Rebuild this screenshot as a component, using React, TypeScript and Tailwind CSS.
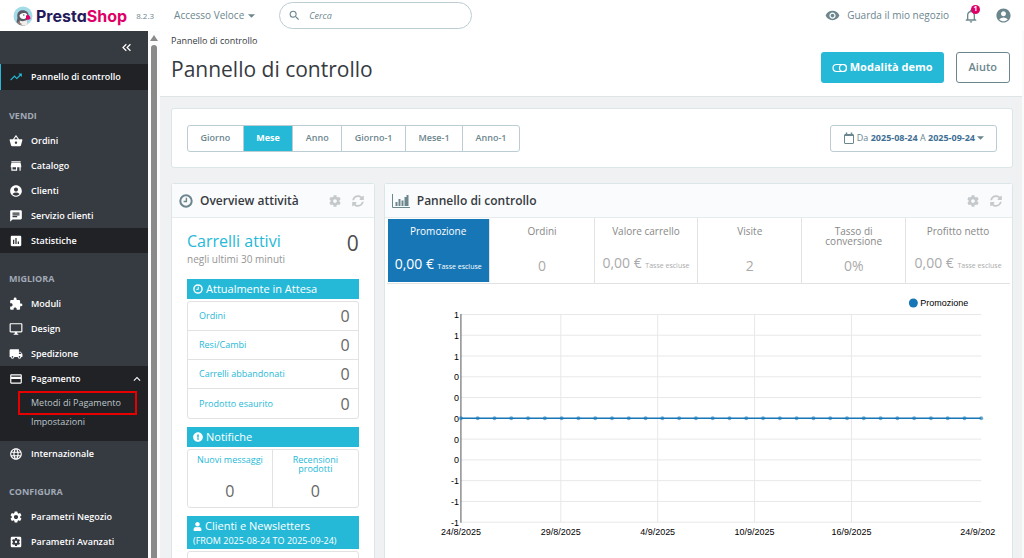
import type { ReactNode } from 'react';
import type { IconType } from 'react-icons';
import { FaCog, FaExclamationCircle, FaSyncAlt, FaUser } from 'react-icons/fa';
import {
  MdAccountCircle,
  MdAssessment,
  MdChat,
  MdExtension,
  MdKeyboardArrowUp,
  MdKeyboardDoubleArrowLeft,
  MdLanguage,
  MdLocalShipping,
  MdNotificationsNone,
  MdOutlineDesktopWindows,
  MdPayment,
  MdSearch,
  MdSettings,
  MdSettingsApplications,
  MdShoppingBasket,
  MdStore,
  MdTrendingUp,
  MdVisibility,
} from 'react-icons/md';

interface MenuItem {
  label: string;
  icon: IconType;
  active?: boolean;
  children?: { label: string; highlighted?: boolean }[];
}

const menu: { title: string; items: MenuItem[] }[] = [
  {
    title: 'VENDI',
    items: [
      { label: 'Ordini', icon: MdShoppingBasket },
      { label: 'Catalogo', icon: MdStore },
      { label: 'Clienti', icon: MdAccountCircle },
      { label: 'Servizio clienti', icon: MdChat },
      { label: 'Statistiche', icon: MdAssessment, active: true },
    ],
  },
  {
    title: 'MIGLIORA',
    items: [
      { label: 'Moduli', icon: MdExtension },
      { label: 'Design', icon: MdOutlineDesktopWindows },
      { label: 'Spedizione', icon: MdLocalShipping },
      {
        label: 'Pagamento',
        icon: MdPayment,
        active: true,
        children: [{ label: 'Metodi di Pagamento', highlighted: true }, { label: 'Impostazioni' }],
      },
      { label: 'Internazionale', icon: MdLanguage },
    ],
  },
  {
    title: 'CONFIGURA',
    items: [
      { label: 'Parametri Negozio', icon: MdSettings },
      { label: 'Parametri Avanzati', icon: MdSettingsApplications },
    ],
  },
];

const periods = ['Giorno', 'Mese', 'Anno', 'Giorno-1', 'Mese-1', 'Anno-1'];

const pending = ['Ordini', 'Resi/Cambi', 'Carrelli abbandonati', 'Prodotto esaurito'];

const kpis = [
  { label: 'Promozione', value: '0,00 €', note: 'Tasse escluse', active: true },
  { label: 'Ordini', value: '0' },
  { label: 'Valore carrello', value: '0,00 €', note: 'Tasse escluse' },
  { label: 'Visite', value: '2' },
  { label: 'Tasso di conversione', value: '0%' },
  { label: 'Profitto netto', value: '0,00 €', note: 'Tasse escluse' },
];

const yLabels = ['1', '1', '1', '0', '0', '0', '0', '0', '-1', '-1', '-1'];

const xTicks = [
  { x: 73, label: '24/8/2025' },
  { x: 173, label: '29/8/2025' },
  { x: 270, label: '4/9/2025' },
  { x: 367, label: '10/9/2025' },
  { x: 464, label: '16/9/2025' },
];

function Puffin() {
  return (
    <svg viewBox="0 0 20 20" className="size-5" aria-hidden="true">
      <circle cx="10" cy="10" r="9.500" fill="#a4dbe8" />
      <path d="M4.500 12C3.500 7 6 4.200 9.800 4.200c3.700 0 5.700 2.300 5.900 5.300L14 13l.5 5.300a9.500 9.500 0 0 1-9 0L3.500 16Z" fill="#5b5b66" />
      <path d="M6.500 9.500C7 7 12.500 6 14 8.300c.8 2-.8 4.200-3 4.700s-4.700-1.500-4.500-3.500Z" fill="#fff" />
      <path d="M6.500 14.500c2.500 1 5 .8 7.500-.5l.8 4.500a9.500 9.500 0 0 1-7.300.6Z" fill="#f3eeee" />
      <path d="M5 15.500 9 18l-1 1.200L4.500 17Z" fill="#a58474" />
      <circle cx="10.800" cy="9" r=".8" fill="#5b5b66" />
      <path d="M13 9.500c2-1.500 4.500 0 4.500 3.300-1.500 1.300-3 1.400-4.500.4Z" fill="#df0067" />
    </svg>
  );
}

function ClockIcon({ className }: { className: string }) {
  return (
    <svg viewBox="0 0 14 14" className={className} fill="none" stroke="currentColor" aria-hidden="true">
      <circle cx="7" cy="7" r="5.700" strokeWidth="2" />
      <path d="M7.400 3.800v3.700H4.600" strokeWidth="1.400" />
    </svg>
  );
}

function ToggleIcon() {
  return (
    <svg viewBox="0 0 16 10" className="h-[10px] w-4" fill="none" stroke="currentColor" strokeWidth="1.200" aria-hidden="true">
      <rect x="1" y="1.500" width="13.500" height="7" rx="3.500" />
      <circle cx="11" cy="5" r="3.500" />
    </svg>
  );
}

function CalendarIcon() {
  return (
    <svg viewBox="0 0 12 12" className="size-3" fill="none" stroke="currentColor" aria-hidden="true">
      <rect x="1.500" y="2.500" width="9" height="9" rx=".5" />
      <path d="M1 3.500h10" />
      <path d="M3.500.5v3M8.500.5v3" strokeWidth="1.500" />
    </svg>
  );
}

function BarsIcon() {
  return (
    <svg viewBox="0 0 18 14" className="h-[14px] w-[18px]" fill="none" stroke="currentColor" aria-hidden="true">
      <path d="M.5 0v13.500H18" />
      <path d="M4.500 8v4M7.500 5v7M10.500 6.500V12M13.500 3v9M15.500 1v11" strokeWidth="2" />
    </svg>
  );
}

function Caret() {
  return (
    <svg viewBox="0 0 8 4" className="h-1 w-[7px]" fill="currentColor" aria-hidden="true">
      <path d="M0 0h8L4 4Z" />
    </svg>
  );
}

function Header() {
  return (
    <header className="flex h-[31px] shrink-0 items-center bg-white pr-3 text-[#6c868e]">
      <a href="#" className="ml-[13px] flex items-center gap-[3px]">
        <Puffin />
        <span className="font-['Inter'] text-[16px] leading-5 font-bold text-[#251b5b] [font-feature-settings:'cv11']">
          Presta<span className="text-[#df0067]">Shop</span>
        </span>
      </a>
      <span className="ml-[9px] text-[8px]">8.2.3</span>
      <button className="ml-5 flex items-center gap-1 text-[10px]">
        Accesso Veloce <Caret />
      </button>
      <label className="ml-6 flex h-[27px] w-[193px] items-center gap-2 rounded-full border border-[#bbcdd2] px-2">
        <MdSearch className="size-[13px]" />
        <input
          type="text"
          aria-label="Cerca"
          placeholder="Cerca"
          className="min-w-0 flex-1 text-[9px] outline-none placeholder:text-[#6c868e] placeholder:italic"
        />
      </label>
      <a href="#" className="ml-auto flex items-center gap-[7px] text-[10px]">
        <MdVisibility className="size-[15px]" />
        Guarda il mio negozio
      </a>
      <button className="relative ml-[14px]" aria-label="Notifiche">
        <MdNotificationsNone className="size-4" />
        <span className="absolute -top-[3px] left-2 flex size-[9px] items-center justify-center rounded-full bg-[#df0067] text-[7px] font-bold text-white">
          1
        </span>
      </button>
      <button className="ml-4" aria-label="Profilo">
        <MdAccountCircle className="size-[17px]" />
      </button>
    </header>
  );
}

function Sidebar() {
  return (
    <nav className="w-[148px] shrink-0 overflow-hidden bg-[#363a41] text-[9px] font-semibold text-white">
      <div className="flex h-[33px] items-center justify-end pr-[14px]">
        <button aria-label="Riduci menu">
          <MdKeyboardDoubleArrowLeft className="size-[15px]" />
        </button>
      </div>
      <a href="#" className="flex h-[26px] items-center gap-2 border-l border-[#25b9d7] bg-[#202226] pl-2">
        <MdTrendingUp className="size-[14px] text-[#25b9d7]" />
        Pannello di controllo
      </a>
      {menu.map((section) => (
        <div key={section.title}>
          <h2 className="mt-[14px] flex h-6 items-center pl-[9px] text-[9px] font-bold text-[#a0a9b5]">{section.title}</h2>
          <ul>
            {section.items.map((item) => (
              <li key={item.label} className={item.active ? 'bg-[#202226]' : ''}>
                <a href="#" className="flex h-[25px] items-center gap-2 pr-1 pl-[9px]">
                  <item.icon className="size-[14px]" />
                  {item.label}
                  {item.children && <MdKeyboardArrowUp className="ml-auto size-[14px]" />}
                </a>
                {item.children && (
                  <ul className="pb-3 font-medium text-[#bec6cc]">
                    {item.children.map((child) => (
                      <li key={child.label}>
                        <a
                          href="#"
                          className={
                            child.highlighted
                              ? 'mr-[11px] ml-[18px] flex h-6 items-center border-2 border-[#e60000] pl-[11px]'
                              : 'flex h-[14px] items-center pl-[31px]'
                          }
                        >
                          {child.label}
                        </a>
                      </li>
                    ))}
                  </ul>
                )}
              </li>
            ))}
          </ul>
        </div>
      ))}
    </nav>
  );
}

function ScrollTrack() {
  return (
    <div className="flex w-3 shrink-0 flex-col items-center gap-1 bg-[#fcfcfc] pt-1" aria-hidden="true">
      <svg viewBox="0 0 8 6" className="h-[6px] w-2" fill="#8a8a8a">
        <path d="M4 0 8 6H0Z" />
      </svg>
      <div className="w-[6px] flex-1 rounded-t-full bg-[#8a8a8a]" />
    </div>
  );
}

function Panel({ icon, title, className, children }: { icon: ReactNode; title: string; className?: string; children: ReactNode }) {
  return (
    <section className={`rounded-[3px] border border-[#dbe6e9] bg-white ${className ?? ''}`}>
      <div className="flex h-[34px] items-center border-b border-[#e6ecee] bg-[#fafbfc] pr-[10px] pl-[7px]">
        <span className="text-[#6c868e]">{icon}</span>
        <h3 className="ml-[7px] text-[12px] font-semibold text-[#363a41]">{title}</h3>
        <button className="ml-auto text-[#c5c9cb]" aria-label="Configura">
          <FaCog className="size-3" />
        </button>
        <button className="ml-[11px] text-[#c5c9cb]" aria-label="Aggiorna">
          <FaSyncAlt className="size-3" />
        </button>
      </div>
      {children}
    </section>
  );
}

function Banner({ icon, children }: { icon: ReactNode; children: ReactNode }) {
  return (
    <h4 className="flex h-5 items-center gap-[3px] bg-[#25b9d7] px-[6px] text-[11px] font-medium text-white">
      {icon}
      {children}
    </h4>
  );
}

function Overview() {
  return (
    <Panel icon={<ClockIcon className="size-[14px]" />} title="Overview attività">
      <div className="px-[15px] pt-[13px]">
        <div className="flex justify-between">
          <div>
            <a href="#" className="block text-[16px] leading-5 text-[#25b9d7]">
              Carrelli attivi
            </a>
            <p className="text-[10px] leading-4 text-[#959595]">negli ultimi 30 minuti</p>
          </div>
          <span className="text-[21px] leading-6 text-[#4d4d4d]">0</span>
        </div>

        <div className="mt-3">
          <Banner icon={<ClockIcon className="size-[10px]" />}>Attualmente in Attesa</Banner>
          <ul className="mt-[2px] rounded-[3px] border border-[#e2e2e2]">
            {pending.map((label) => (
              <li key={label} className="flex h-[29px] items-center justify-between border-b border-[#e2e2e2] pr-2 pl-[11px] last:border-b-0">
                <a href="#" className="text-[9px] text-[#25b9d7]">
                  {label}
                </a>
                <span className="text-[16px] text-[#666]">0</span>
              </li>
            ))}
          </ul>
        </div>

        <div className="mt-2">
          <Banner icon={<FaExclamationCircle className="size-[10px]" />}>Notifiche</Banner>
          <div className="mt-[2px] grid h-[59px] grid-cols-2 divide-x divide-[#e2e2e2] rounded-[3px] border border-[#e2e2e2] text-center">
            {['Nuovi messaggi', 'Recensioni prodotti'].map((label) => (
              <div key={label} className="flex flex-col justify-between px-4 pt-[5px] pb-[6px] first:px-1">
                <a href="#" className="text-[9px] leading-[9px] text-[#25b9d7]">
                  {label}
                </a>
                <span className="text-[16px] leading-5 text-[#666]">0</span>
              </div>
            ))}
          </div>
        </div>

        <div className="mt-2">
          <div className="bg-[#25b9d7] pb-[3px] text-white">
            <Banner icon={<FaUser className="size-[9px]" />}>Clienti e Newsletters</Banner>
            <p className="px-[6px] text-[9px] leading-[10px] font-medium">(FROM 2025-08-24 TO 2025-09-24)</p>
          </div>
          <div className="mt-[2px] h-[30px] rounded-[3px] border border-[#e2e2e2]" />
        </div>
      </div>
    </Panel>
  );
}

function Chart() {
  const points = Array.from({ length: 32 }, (_, i) => 73 + (i * 521) / 31);

  return (
    <svg viewBox="0 0 622 250" className="block w-full font-['Liberation_Sans',sans-serif] text-[9px]" fill="#000">
      <circle cx="526" cy="8" r="4.500" fill="#1777b6" />
      <text x="533" y="11">Promozione</text>

      {yLabels.map((label, i) => (
        <g key={i}>
          <path d={`M73 ${19.5 + i * 20.8}H594`} stroke="#e8e8e8" />
          <text x="71" y={23 + i * 20.8} textAnchor="end">{label}</text>
        </g>
      ))}
      {xTicks.map((tick, i) => (
        <g key={tick.label}>
          <path d={`M${tick.x} 19V228`} stroke={i === 0 ? '#555' : '#e8e8e8'} />
          <text x={tick.x} y="240" textAnchor="middle">{tick.label}</text>
        </g>
      ))}
      <text x="573" y="240">24/9/202</text>

      {/* Flat series at zero */}
      <path d="M73 123.500H594" stroke="#1777b6" strokeWidth="1.500" />
      {points.map((x) => (
        <circle key={x} cx={x} cy="123.500" r="2" fill="#1777b6" fillOpacity=".6" />
      ))}
    </svg>
  );
}

function Trends() {
  return (
    <Panel icon={<BarsIcon />} title="Pannello di controllo" className="col-span-3">
      <div className="mx-[2px] grid h-[66px] grid-cols-6 divide-x divide-[#e2e2e2] border-b border-[#e2e2e2] text-center">
        {kpis.map((kpi) => (
          <button
            key={kpi.label}
            className={`flex flex-col items-center justify-between ${
              kpi.active ? 'm-px bg-[#1777b6] pt-[7px] pb-[5px] text-white' : 'pt-2 pb-[7px] text-[#aaa]'
            }`}
          >
            <span className={`px-4 text-[10px] leading-[10px] ${kpi.active ? '' : 'text-[#888]'}`}>{kpi.label}</span>
            <span className="text-[14px] leading-5 whitespace-nowrap">
              {kpi.value} {kpi.note && <small className="text-[7px]">{kpi.note}</small>}
            </span>
          </button>
        ))}
      </div>
      <div className="px-[3px] pt-[11px]">
        <Chart />
      </div>
    </Panel>
  );
}

export default function App() {
  return (
    <div className="flex h-screen flex-col overflow-hidden bg-white font-['Open_Sans',sans-serif]">
      <Header />
      <div className="flex min-h-0 flex-1">
        <Sidebar />
        <ScrollTrack />
        <main className="min-w-0 flex-1 overflow-hidden border-r-2 border-[#fafafa] bg-[#eff1f2]">
          {/* Page title */}
          <div className="flex h-[66px] justify-between border-b border-[#dfe4e6] bg-white pr-3 pl-[11px] text-[#363a41]">
            <div>
              <p className="pt-[2px] text-[9px] leading-4">Pannello di controllo</p>
              <h1 className="mt-1 text-[21px] leading-8">Pannello di controllo</h1>
            </div>
            <div className="mt-[21px] flex h-[31px] gap-3">
              <button className="flex items-center gap-[2px] rounded-[3px] bg-[#25b9d7] px-[11px] text-[11px] font-bold text-white">
                <ToggleIcon />
                Modalità demo
              </button>
              <button className="rounded-[3px] border border-[#6c868e] px-3 text-[11px] font-semibold text-[#6c868e]">Aiuto</button>
            </div>
          </div>

          <div className="pt-[11px] pr-[9px] pl-[11px]">
            {/* Date range */}
            <div className="flex h-[60px] items-center justify-between rounded-[3px] border border-[#dbe6e9] bg-white px-[15px]">
              <div className="flex h-[27px] w-[333px] divide-x divide-[#bbcdd2] rounded-[3px] border border-[#bbcdd2] text-[9px] font-semibold text-[#6c868e]">
                {periods.map((period) => (
                  <button
                    key={period}
                    className={period === 'Mese' ? 'flex-auto bg-[#25b9d7] px-3 font-bold text-white' : 'flex-auto px-3'}
                  >
                    {period}
                  </button>
                ))}
              </div>
              <button className="flex h-[27px] items-center gap-[2px] rounded-[3px] border border-[#bbcdd2] px-3 text-[9px] text-[#6c868e]">
                <CalendarIcon />
                <span>
                  Da <strong className="text-[#3f6f94]">2025-08-24</strong> A <strong className="text-[#3f6f94]">2025-09-24</strong>
                </span>
                <Caret />
              </button>
            </div>

            <div className="mt-[15px] grid grid-cols-4 gap-[9px]">
              <Overview />
              <Trends />
            </div>
          </div>
        </main>
      </div>
    </div>
  );
}
